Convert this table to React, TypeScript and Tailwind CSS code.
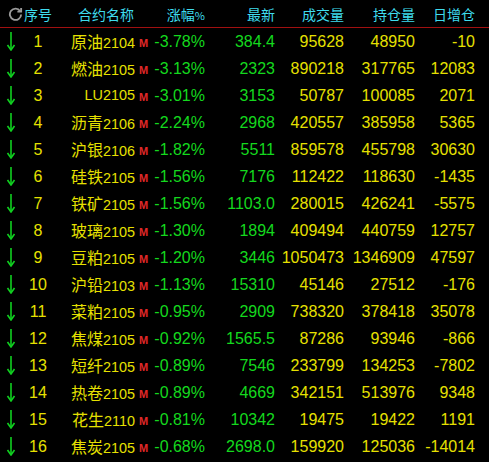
const rows = [
  ["1", "原油", "2104", "-3.78%", "384.4", "95628", "48950", "-10"],
  ["2", "燃油", "2105", "-3.13%", "2323", "890218", "317765", "12083"],
  ["3", "", "LU2105", "-3.01%", "3153", "50787", "100085", "2071"],
  ["4", "沥青", "2106", "-2.24%", "2968", "420557", "385958", "5365"],
  ["5", "沪银", "2106", "-1.82%", "5511", "859578", "455798", "30630"],
  ["6", "硅铁", "2105", "-1.56%", "7176", "112422", "118630", "-1435"],
  ["7", "铁矿", "2105", "-1.56%", "1103.0", "280015", "426241", "-5575"],
  ["8", "玻璃", "2105", "-1.30%", "1894", "409494", "440759", "12757"],
  ["9", "豆粕", "2105", "-1.20%", "3446", "1050473", "1346909", "47597"],
  ["10", "沪铅", "2103", "-1.13%", "15310", "45146", "27512", "-176"],
  ["11", "菜粕", "2105", "-0.95%", "2909", "738320", "378418", "35078"],
  ["12", "焦煤", "2105", "-0.92%", "1565.5", "87286", "93946", "-866"],
  ["13", "短纤", "2105", "-0.89%", "7546", "233799", "134253", "-7802"],
  ["14", "热卷", "2105", "-0.89%", "4669", "342151", "513976", "9348"],
  ["15", "花生", "2110", "-0.81%", "10342", "19475", "19422", "1191"],
  ["16", "焦炭", "2105", "-0.68%", "2698.0", "159920", "125036", "-14014"],
];

const cjk = "font-['Noto_Sans_CJK_SC',sans-serif]";
const num = "font-['Liberation_Sans',sans-serif]";

const App = () => {
  return (
    <div className="w-[489px] h-[462px] bg-black overflow-hidden">
      <div className={`flex items-center h-[27px] text-[14px] text-[#3fdcee] ${cjk} leading-none whitespace-nowrap`}>
        <div className="w-[24px] flex justify-center pl-[6px]">
          <svg width="15" height="15" viewBox="0 0 16 16" fill="none" stroke="#9a9a9a" strokeWidth="2">
            <path d="M13 5.5A6 6 0 1 0 14 9" />
            <path d="M14 2v4h-4" />
          </svg>
        </div>
        <div className="w-[28px]">序号</div>
        <div className="w-[82px] text-right">合约名称</div>
        <div className="w-[71px] text-right">
          涨幅<span className="text-[11px]">%</span>
        </div>
        <div className="w-[70px] text-right">最新</div>
        <div className="w-[69px] text-right">成交量</div>
        <div className="w-[71px] text-right">持仓量</div>
        <div className="w-[60px] text-right">日增仓</div>
      </div>
      <div className="h-px bg-[#a01010]" />
      {rows.map((r) => (
        <div key={r[0]} className="flex items-center h-[27px] leading-none whitespace-nowrap">
          <div className="w-[20px] flex justify-center pl-[1px]">
            <svg width="10" height="19" viewBox="0 0 10 19" fill="none" stroke="#10d020" strokeWidth="1.6">
              <path d="M5 0v18" />
              <path d="M1.5 13L5 18l3.5-5" />
            </svg>
          </div>
          <div className={`w-[36px] text-center text-[16px] text-[#e6e000] ${num}`}>{r[0]}</div>
          <div className="w-[79px] flex justify-end items-baseline text-[#e6e000]">
            <span className={`text-[16px] ${cjk}`}>{r[1]}</span>
            <span className={`text-[14.4px] ${num}`}>{r[2]}</span>
          </div>
          <div className="w-[16px] self-start pt-[5px] pl-[4px]">
            <span className={`text-[11px] font-bold text-[#e02828] ${num}`}>M</span>
          </div>
          <div className={`w-[54px] text-right text-[16px] text-[#14d81e] ${num}`}>{r[3]}</div>
          <div className={`w-[70px] text-right text-[16px] text-[#14d81e] ${num}`}>{r[4]}</div>
          <div className={`w-[69px] text-right text-[16px] text-[#e6e000] ${num}`}>{r[5]}</div>
          <div className={`w-[71px] text-right text-[16px] text-[#e6e000] ${num}`}>{r[6]}</div>
          <div className={`w-[60px] text-right text-[16px] text-[#e6e000] ${num}`}>{r[7]}</div>
        </div>
      ))}
    </div>
  );
};

export default App;
